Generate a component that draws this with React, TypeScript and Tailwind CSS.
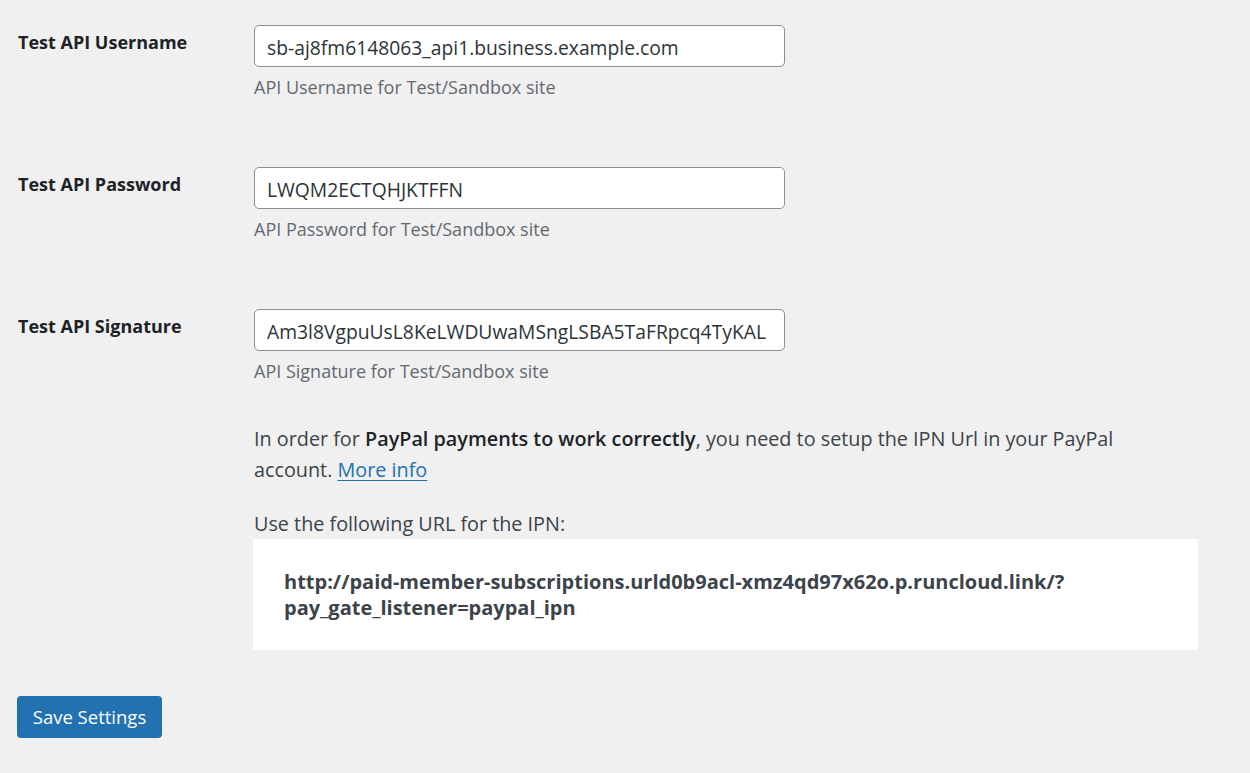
const FONT = "font-['Open_Sans','Noto_Sans',sans-serif]";

const FIELDS = [
  {
    label: "Test API Username",
    value: "sb-aj8fm6148063_api1.business.example.com",
    help: "API Username for Test/Sandbox site",
  },
  {
    label: "Test API Password",
    value: "LWQM2ECTQHJKTFFN",
    help: "API Password for Test/Sandbox site",
  },
  {
    label: "Test API Signature",
    value: "Am3l8VgpuUsL8KeLWDUwaMSngLSBA5TaFRpcq4TyKAL",
    help: "API Signature for Test/Sandbox site",
  },
];

export default function App() {
  return (
    <div className={`${FONT} min-h-[773px] bg-[#f0f0f0] pl-[18px] pt-[25px] text-[#3c434a]`}>
      <div className="flex flex-col gap-[68px]">
        {FIELDS.map((field) => (
          <div key={field.label} className="flex">
            <label className="w-[236px] shrink-0 pt-[5px] text-[18px] leading-[24px] font-bold text-[#1d2327]">
              {field.label}
            </label>
            <div className="flex flex-col">
              <input
                readOnly
                value={field.value}
                className="h-[42px] w-[531px] rounded-[5px] border border-[#8c8f94] bg-white px-[12px] pt-[2px] text-[19.3px] text-[#2c3338] outline-none"
              />
              <p className="mt-[8px] text-[18px] leading-[24px] text-[#646970]">{field.help}</p>
            </div>
          </div>
        ))}
      </div>

      <div className="ml-[235px] w-[945px]">
        <p className="mt-[40px] pl-px text-[19.8px] leading-[31px]">
          In order for <strong className="font-semibold text-[#1d2327]">PayPal payments to work correctly</strong>, you
          need to setup the IPN Url in your PayPal
          <br />
          account.{" "}
          <a href="#" className="text-[#2271b1] underline underline-offset-[3px]">
            More info
          </a>
        </p>
        <p className="mt-[23px] pl-px text-[19.8px] leading-[31px]">Use the following URL for the IPN:</p>
        <div className="bg-white px-[31px] pt-[30px] pb-[29px] text-[20px] leading-[26px] font-bold text-[#3c434a]">
          http://paid-member-subscriptions.urld0b9acl-xmz4qd97x62o.p.runcloud.link/?
          <br />
          pay_gate_listener=paypal_ipn
        </div>
      </div>

      <button className="-ml-px mt-[46px] h-[42px] w-[145px] rounded-[4px] bg-[#2271b1] text-[18.5px] text-white">
        Save Settings
      </button>
    </div>
  );
}
